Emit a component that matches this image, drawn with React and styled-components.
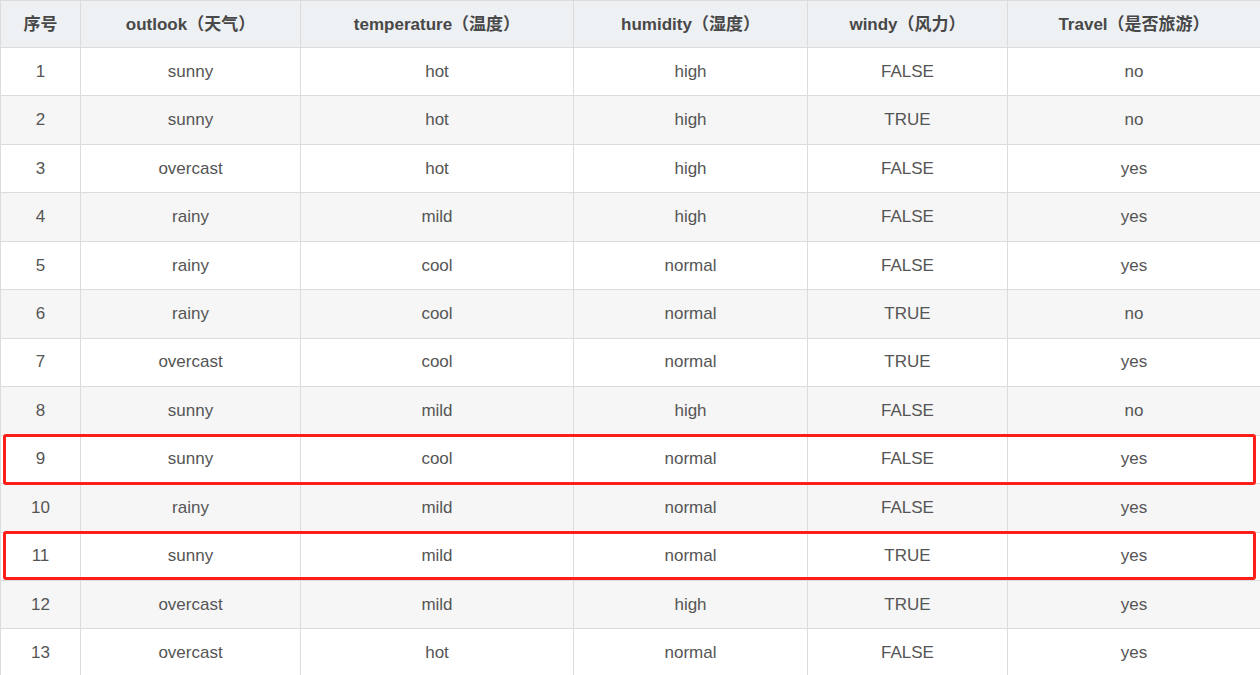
import React from "react";
import styled, { createGlobalStyle } from "styled-components";

const Global = createGlobalStyle`
  html, body { margin: 0; padding: 0; background: #ffffff; }
  body { font-family: "Liberation Sans", Arial, "Noto Sans CJK SC", sans-serif; }
`;

const Wrap = styled.div`
  position: relative;
  width: 1260px;
`;

const Table = styled.table`
  width: 1260px;
  border-collapse: collapse;
  table-layout: fixed;
  font-size: 17px;
  color: #555555;
`;

const Th = styled.th`
  height: 47px;
  padding: 0 0 4px 0;
  box-sizing: border-box;
  background: #eef1f4;
  border: 1px solid #dcdcdc;
  font-weight: bold;
  color: #484848;
  text-align: center;
  vertical-align: middle;
`;

const Tr = styled.tr`
  background: ${(p) => (p.$even ? "#f6f6f6" : "#ffffff")};
`;

const Td = styled.td`
  height: 47.46px;
  padding: 0;
  border: 1px solid #dcdcdc;
  text-align: center;
  vertical-align: middle;
`;

const Highlight = styled.div`
  position: absolute;
  left: 3px;
  width: 1253px;
  height: ${(p) => p.$h}px;
  border: 3px solid #ff1f1a;
  border-radius: 3px;
  box-sizing: border-box;
  pointer-events: none;
`;

const cols = [80, 220, 273, 234, 200, 253];
const headers = [
  "序号",
  "outlook（天气）",
  "temperature（温度）",
  "humidity（湿度）",
  "windy（风力）",
  "Travel（是否旅游）",
];

const rows = [
  ["sunny", "hot", "high", "FALSE", "no"],
  ["sunny", "hot", "high", "TRUE", "no"],
  ["overcast", "hot", "high", "FALSE", "yes"],
  ["rainy", "mild", "high", "FALSE", "yes"],
  ["rainy", "cool", "normal", "FALSE", "yes"],
  ["rainy", "cool", "normal", "TRUE", "no"],
  ["overcast", "cool", "normal", "TRUE", "yes"],
  ["sunny", "mild", "high", "FALSE", "no"],
  ["sunny", "cool", "normal", "FALSE", "yes"],
  ["rainy", "mild", "normal", "FALSE", "yes"],
  ["sunny", "mild", "normal", "TRUE", "yes"],
  ["overcast", "mild", "high", "TRUE", "yes"],
  ["overcast", "hot", "normal", "FALSE", "yes"],
];

export default function App() {
  return (
    <>
      <Global />
      <Wrap>
        <Table>
          <colgroup>
            {cols.map((w, i) => (
              <col key={i} style={{ width: w }} />
            ))}
          </colgroup>
          <thead>
            <tr>
              {headers.map((h) => (
                <Th key={h}>{h}</Th>
              ))}
            </tr>
          </thead>
          <tbody>
            {rows.map((r, i) => (
              <Tr key={i} $even={i % 2 === 1}>
                <Td>{i + 1}</Td>
                {r.map((c, j) => (
                  <Td key={j}>{c}</Td>
                ))}
              </Tr>
            ))}
          </tbody>
        </Table>
        <Highlight style={{ top: 434 }} $h={51} />
        <Highlight style={{ top: 531 }} $h={49} />
      </Wrap>
    </>
  );
}
